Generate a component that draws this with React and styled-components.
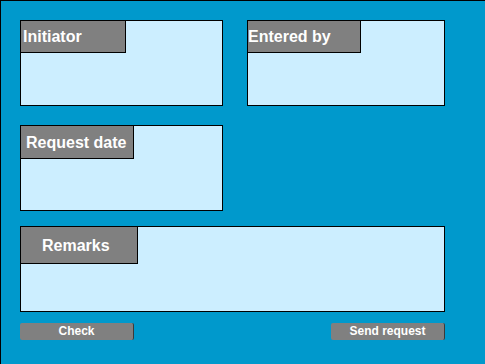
import React from "react";
import styled, { createGlobalStyle } from "styled-components";

const GlobalStyle = createGlobalStyle`
  html, body {
    margin: 0;
    padding: 0;
    background: #0099cc;
  }
  * {
    box-sizing: border-box;
  }
`;

const Page = styled.div`
  width: 485px;
  height: 364px;
  background: #0099cc;
  border-top: 1px solid #000;
  border-left: 1px solid #000;
  padding: 19px 0 0 19px;
  font-family: "Liberation Sans", Arial, sans-serif;
  display: flex;
  flex-direction: column;
`;

const Row = styled.div`
  display: flex;
  gap: 24px;
  margin-top: ${(p) => p.$top || 0}px;
  width: ${(p) => (p.$spread ? "425px" : "auto")};
  justify-content: ${(p) => (p.$spread ? "space-between" : "flex-start")};
`;

const Field = styled.div`
  width: ${(p) => p.$w}px;
  height: 86px;
  background: #cceeff;
  border: 1px solid #000;
  display: flex;
  align-items: flex-start;
`;

const Label = styled.div`
  width: ${(p) => p.$w}px;
  height: ${(p) => p.$h || 32}px;
  background: #808080;
  border-right: 1px solid #000;
  border-bottom: 1px solid #000;
  color: #fff;
  font-size: 16px;
  font-weight: bold;
  display: flex;
  align-items: center;
  padding-left: ${(p) => p.$pad || 0}px;
  padding-top: 1px;
  white-space: nowrap;
`;

const Button = styled.button`
  width: 114px;
  height: 17px;
  padding: 0;
  margin: 0;
  background: #808080;
  border: none;
  border-right: 1px solid #3a3a3a;
  border-radius: 2px;
  color: #fff;
  font-family: "Liberation Sans", Arial, sans-serif;
  font-size: 12px;
  font-weight: bold;
  line-height: 17px;
  text-align: center;
  cursor: pointer;
`;

export default function App() {
  return (
    <>
      <GlobalStyle />
      <Page>
        <Row>
          <Field $w={203}>
            <Label $w={105} $pad={2}>Initiator</Label>
          </Field>
          <Field $w={198}>
            <Label $w={113} $pad={0}>Entered by</Label>
          </Field>
        </Row>

        <Row $top={19}>
          <Field $w={203}>
            <Label $w={113} $h={33} $pad={5}>Request date</Label>
          </Field>
        </Row>

        <Row $top={15}>
          <Field $w={425}>
            <Label $w={117} $h={37} $pad={21}>Remarks</Label>
          </Field>
        </Row>

        <Row $top={11} $spread>
          <Button>Check</Button>
          <Button>Send request</Button>
        </Row>
      </Page>
    </>
  );
}
